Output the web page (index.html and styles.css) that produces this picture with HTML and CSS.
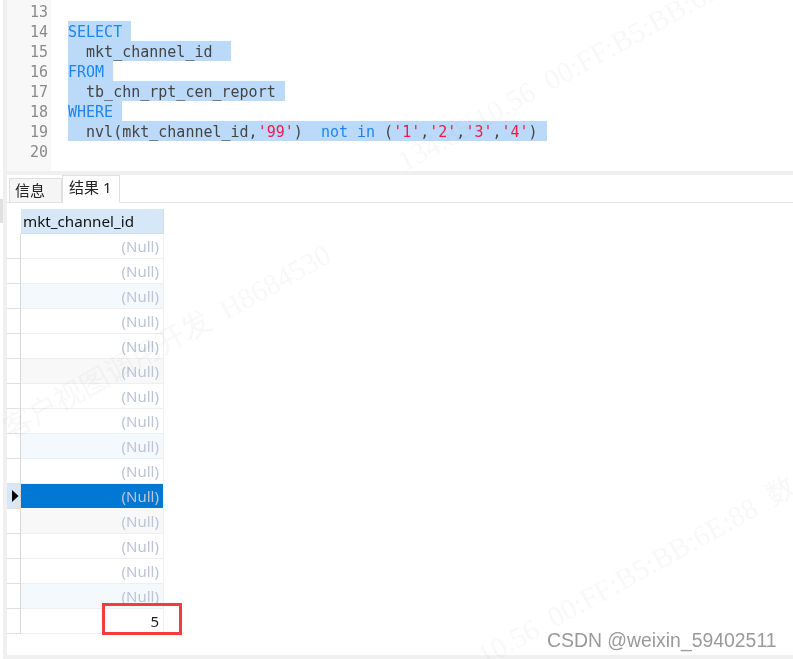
FILE: index.html
```html
<!DOCTYPE html>
<html lang="zh">
<head>
<meta charset="utf-8">
<title>Query result</title>
<link rel="stylesheet" href="styles.css">
</head>
<body>
<div class="frame">
  <div class="rail"><span class="handle"></span></div>
  <main class="app">
    <section class="editor">
      <div class="line"><span class="num">13</span></div>
      <div class="line"><span class="num">14</span><span class="sel"><span class="kw">SELECT</span> </span></div>
      <div class="line"><span class="num">15</span><span class="sel">  mkt_channel_id  </span></div>
      <div class="line"><span class="num">16</span><span class="sel"><span class="kw">FROM</span> </span></div>
      <div class="line"><span class="num">17</span><span class="sel">  tb_chn_rpt_cen_report </span></div>
      <div class="line"><span class="num">18</span><span class="sel"><span class="kw">WHERE</span> </span></div>
      <div class="line"><span class="num">19</span><span class="sel">  nvl(mkt_channel_id,<span class="str">'99'</span>)  <span class="kw">not</span> <span class="kw">in</span> (<span class="str">'1'</span>,<span class="str">'2'</span>,<span class="str">'3'</span>,<span class="str">'4'</span>) </span></div>
      <div class="line"><span class="num">20</span></div>
    </section>
    <nav class="tabs">
      <span class="tab">信息</span>
      <span class="tab active">结果 1</span>
    </nav>
    <section class="results">
      <div class="grid">
        <div class="row head"><span class="ind blank"></span><span class="cell">mkt_channel_id</span></div>
        <div class="row"><span class="ind"></span><span class="cell null">(Null)</span></div>
        <div class="row"><span class="ind"></span><span class="cell null">(Null)</span></div>
        <div class="row blue"><span class="ind"></span><span class="cell null">(Null)</span></div>
        <div class="row"><span class="ind"></span><span class="cell null">(Null)</span></div>
        <div class="row"><span class="ind"></span><span class="cell null">(Null)</span></div>
        <div class="row grey"><span class="ind"></span><span class="cell null">(Null)</span></div>
        <div class="row"><span class="ind"></span><span class="cell null">(Null)</span></div>
        <div class="row"><span class="ind"></span><span class="cell null">(Null)</span></div>
        <div class="row blue"><span class="ind"></span><span class="cell null">(Null)</span></div>
        <div class="row"><span class="ind"></span><span class="cell null">(Null)</span></div>
        <div class="row current"><span class="ind"><svg class="arrow" width="7" height="12" viewBox="0 0 7 12"><path d="M0 0 L6.5 6 L0 12 Z" fill="#000"/></svg></span><span class="cell null">(Null)</span></div>
        <div class="row grey"><span class="ind"></span><span class="cell null">(Null)</span></div>
        <div class="row"><span class="ind"></span><span class="cell null">(Null)</span></div>
        <div class="row"><span class="ind"></span><span class="cell null">(Null)</span></div>
        <div class="row blue"><span class="ind"></span><span class="cell null">(Null)</span></div>
        <div class="row"><span class="ind"></span><span class="cell val">5</span></div>
      </div>
    </section>
  </main>
</div>
<div class="mark mark-a">134.85.10.56&nbsp;&nbsp;00:FF:B5:BB:6E:88</div>
<div class="mark mark-b">客户视图调用开发&nbsp;&nbsp;H8684530</div>
<div class="mark mark-c">10.56&nbsp;&nbsp;00:FF:B5:BB:6E:88&nbsp;&nbsp;数</div>
<div class="redbox"></div>
<div class="credit">CSDN @weixin_59402511</div>
</body>
</html>
```
FILE: styles.css
```css
* { box-sizing: border-box; }
html, body { margin: 0; padding: 0; }
body {
  width: 793px;
  height: 659px;
  overflow: hidden;
  background: #fff;
  position: relative;
  font-family: "Noto Sans", "Noto Sans CJK SC", sans-serif;
}
.frame { display: flex; height: 659px; padding-left: 3px; }
.rail {
  width: 4px;
  background: #f0f0f0;
  padding-top: 199px;
  flex: none;
}
.handle { display: block; width: 3px; height: 24px; margin-left: -3px; background: #e0e0e0; }
.app { flex: 1; display: flex; flex-direction: column; height: 655px; box-shadow: 0 4px 0 #f0f0f0; }
.editor {
  height: 171px;
  flex: none;
  font-family: "DejaVu Sans Mono", monospace;
  font-size: 15px;
  line-height: 22px;
  color: #444;
  background: linear-gradient(to right, #f8f8f8 44px, #fff 44px);
  padding-top: 1px;
}
.line { height: 20px; display: flex; white-space: pre; }
.num { width: 61px; flex: none; padding-left: 23px; color: #8a8a8a; }
.sel { background: #bbdafa; height: 20px; }
.kw { color: #1e84f0; }
.str { color: #f5174f; }
.tabs {
  height: 32px;
  flex: none;
  display: flex;
  align-items: flex-end;
  padding: 0 0 0 2px;
  border-top: 4px solid #f0f0f0;
  border-bottom: 1px solid #e3e3e3;
}
.tab {
  width: 53px;
  height: 25px;
  margin-bottom: -1px;
  background: #f5f5f5;
  border: 1px solid #e0e0e0;
  font-size: 15px;
  line-height: 22px;
  color: #222;
  padding-left: 5px;
}
.tab.active {
  width: 58px;
  height: 28px;
  background: #fff;
  border-bottom-color: #fff;
  line-height: 23px;
  font-size: 15px;
  padding-left: 6px;
}
.results { flex: 1; padding-top: 6px; }
.grid { width: 157px; }
.row { display: flex; height: 25px; }
.ind {
  width: 14px;
  flex: none;
  border-right: 1px solid #d8d8d8;
  border-bottom: 1px solid #e0e0e0;
  display: flex;
  align-items: center;
  padding-left: 5px;
}
.ind.blank { border-bottom: 0; border-right: 0; }
.cell {
  width: 143px;
  flex: none;
  border-right: 1px solid #efefef;
  border-bottom: 1px solid #efefef;
  font-size: 15px;
  line-height: 24px;
  text-align: right;
  padding-right: 4px;
}
.head .cell {
  background: #d6e8f8;
  border-right: 1px solid #d0dde8;
  border-bottom: 1px solid #d0dde8;
  text-align: left;
  padding-left: 2px;
  font-size: 15.2px;
  color: #111;
}
.null { color: #bcc4d8; }
.val { color: #222; font-size: 15px; }
.blue .cell { background: #f4f9fe; }
.grey .cell { background: #f8f8f8; }
.current .cell { background: #0078d4; border-color: #fff; }
.current .ind { background: #d6e8f8; }
.mark {
  position: absolute;
  font-family: "Liberation Serif", "Noto Sans CJK SC", serif;
  font-size: 29px;
  line-height: 33px;
  color: #f8f8f8;
  white-space: nowrap;
  transform-origin: left bottom;
  transform: rotate(-29deg);
  pointer-events: none;
  mix-blend-mode: multiply;
}
.mark-a { left: 408px; top: 145px; }
.mark-b { left: 14px; top: 413px; }
.mark-c { left: 488px; top: 640px; }
.redbox {
  position: absolute;
  left: 102px;
  top: 603px;
  width: 80px;
  height: 32px;
  border: 3px solid #f63b3b;
}
.credit {
  position: absolute;
  left: 547px;
  top: 630px;
  font-family: "Liberation Sans", sans-serif;
  font-size: 19.4px;
  line-height: 21px;
  color: #9a9a9a;
}
```
